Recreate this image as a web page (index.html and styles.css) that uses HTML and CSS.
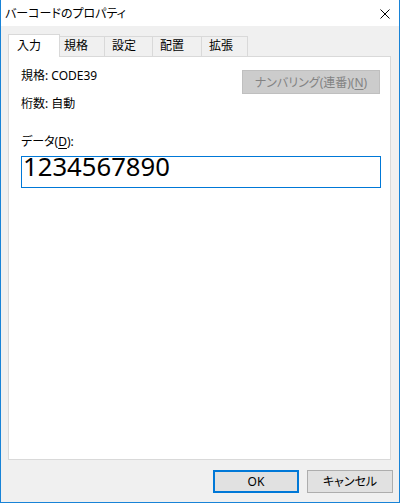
FILE: index.html
```html
<!DOCTYPE html>
<html lang="ja">
<head>
	<meta charset="UTF-8">
	<title>バーコードのプロパティ</title>
	<link rel="stylesheet" href="styles.css">
</head>
<body>

	<div class="window">
		<div class="titlebar">
			<span class="title">バーコードのプロパティ</span>
			<span class="close">
				<svg width="10" height="10" viewBox="0 0 10 10"><path d="M0.5 0.5L9.5 9.5M9.5 0.5L0.5 9.5" stroke="#000" stroke-width="1" fill="none"/></svg>
			</span>
		</div>

		<div class="dlg-body">
			<!-- タブ -->
			<div class="tabs">
				<span class="tab tab-1 active">入力</span>
				<span class="tab tab-2">規格</span>
				<span class="tab tab-3">設定</span>
				<span class="tab tab-4">配置</span>
				<span class="tab tab-5">拡張</span>
			</div>

			<div class="panel">
				<div class="info-row">
					<div class="specs">
						<p class="spec">規格: CODE39</p>
						<p class="spec spec-2">桁数: 自動</p>
					</div>
					<button class="btn btn-disabled" disabled>ナンバリング(連番)(<u>N</u>)</button>
				</div>
				<p class="data-label">データ(<u>D</u>):</p>
				<div class="data-input">1234567890</div>
			</div>

			<div class="footer">
				<button class="btn btn-ok">OK</button>
				<button class="btn btn-cancel">キャンセル</button>
			</div>
		</div>
	</div>

</body>
</html>
```

FILE: styles.css
```css
*{margin: 0;padding: 0;box-sizing: border-box;}
body{font-family: "Noto Sans", "Noto Sans CJK JP", sans-serif;font-size: 12px;color: #000;font-feature-settings: "palt";}

.window{width: 400px;height: 503px;border: 1px solid #1883d7;border-top: none;background-color: #fff;display: flex;flex-direction: column;}
.titlebar{height: 26px;display: flex;align-items: center;justify-content: space-between;padding-left: 4px;padding-right: 9px;}
.title{line-height: 16px;padding-top: 1px;}
.close{width: 10px;height: 10px;display: block;margin-top: 1px;}
.close svg{display: block;}

.dlg-body{flex: 1;background-color: #f0f0f0;padding: 8px 6px 9px 7px;display: flex;flex-direction: column;}

.tabs{display: flex;align-items: flex-end;height: 22px;}
.tab{height: 20px;line-height: 18px;border: 1px solid #d9d9d9;border-bottom: none;margin-left: -1px;padding-left: 7px;white-space: nowrap;}
.tab.active{height: 23px;line-height: 20px;margin-left: 0;margin-bottom: -1px;background-color: #fff;position: relative;z-index: 1;padding-left: 8px;padding-top: 1px;}
.tab-1{width: 52px;}
.tab-2{width: 46px;padding-left: 4px;}
.tab-3{width: 49px;}
.tab-4{width: 50px;}
.tab-5{width: 47px;}

.panel{width: 383px;height: 404px;border: 1px solid #d9d9d9;background-color: #fff;padding-left: 12px;}
.info-row{display: flex;justify-content: space-between;align-items: flex-start;margin-top: 11px;padding-right: 10px;}
.spec{line-height: 16px;}
.spec-2{margin-top: 12px;}
.data-label{margin-top: 22px;line-height: 16px;}
.data-label u, .btn u{text-decoration-thickness: 1px;text-underline-offset: 2px;}
.data-input{margin-top: 6px;width: 360px;height: 32px;border: 1px solid #0078d7;padding-left: 1px;font-family: "Noto Sans", sans-serif;font-size: 25.7px;line-height: 18px;padding-top: 1px;font-feature-settings: "tnum";}

.btn{font-family: inherit;font-size: 12px;font-feature-settings: "palt";color: #000;background-color: #e1e1e1;border: 1px solid #adadad;height: 23px;line-height: 19px;cursor: pointer;}
.btn-disabled{width: 138px;height: 24px;margin-top: 2px;background-color: #cccccc;border-color: #bfbfbf;color: #838383;cursor: default;}

.footer{display: flex;justify-content: flex-end;gap: 8px;margin-top: 10px;}
.btn-ok, .btn-cancel{width: 86px;}
.btn-ok{border: 2px solid #0078d7;}
```
